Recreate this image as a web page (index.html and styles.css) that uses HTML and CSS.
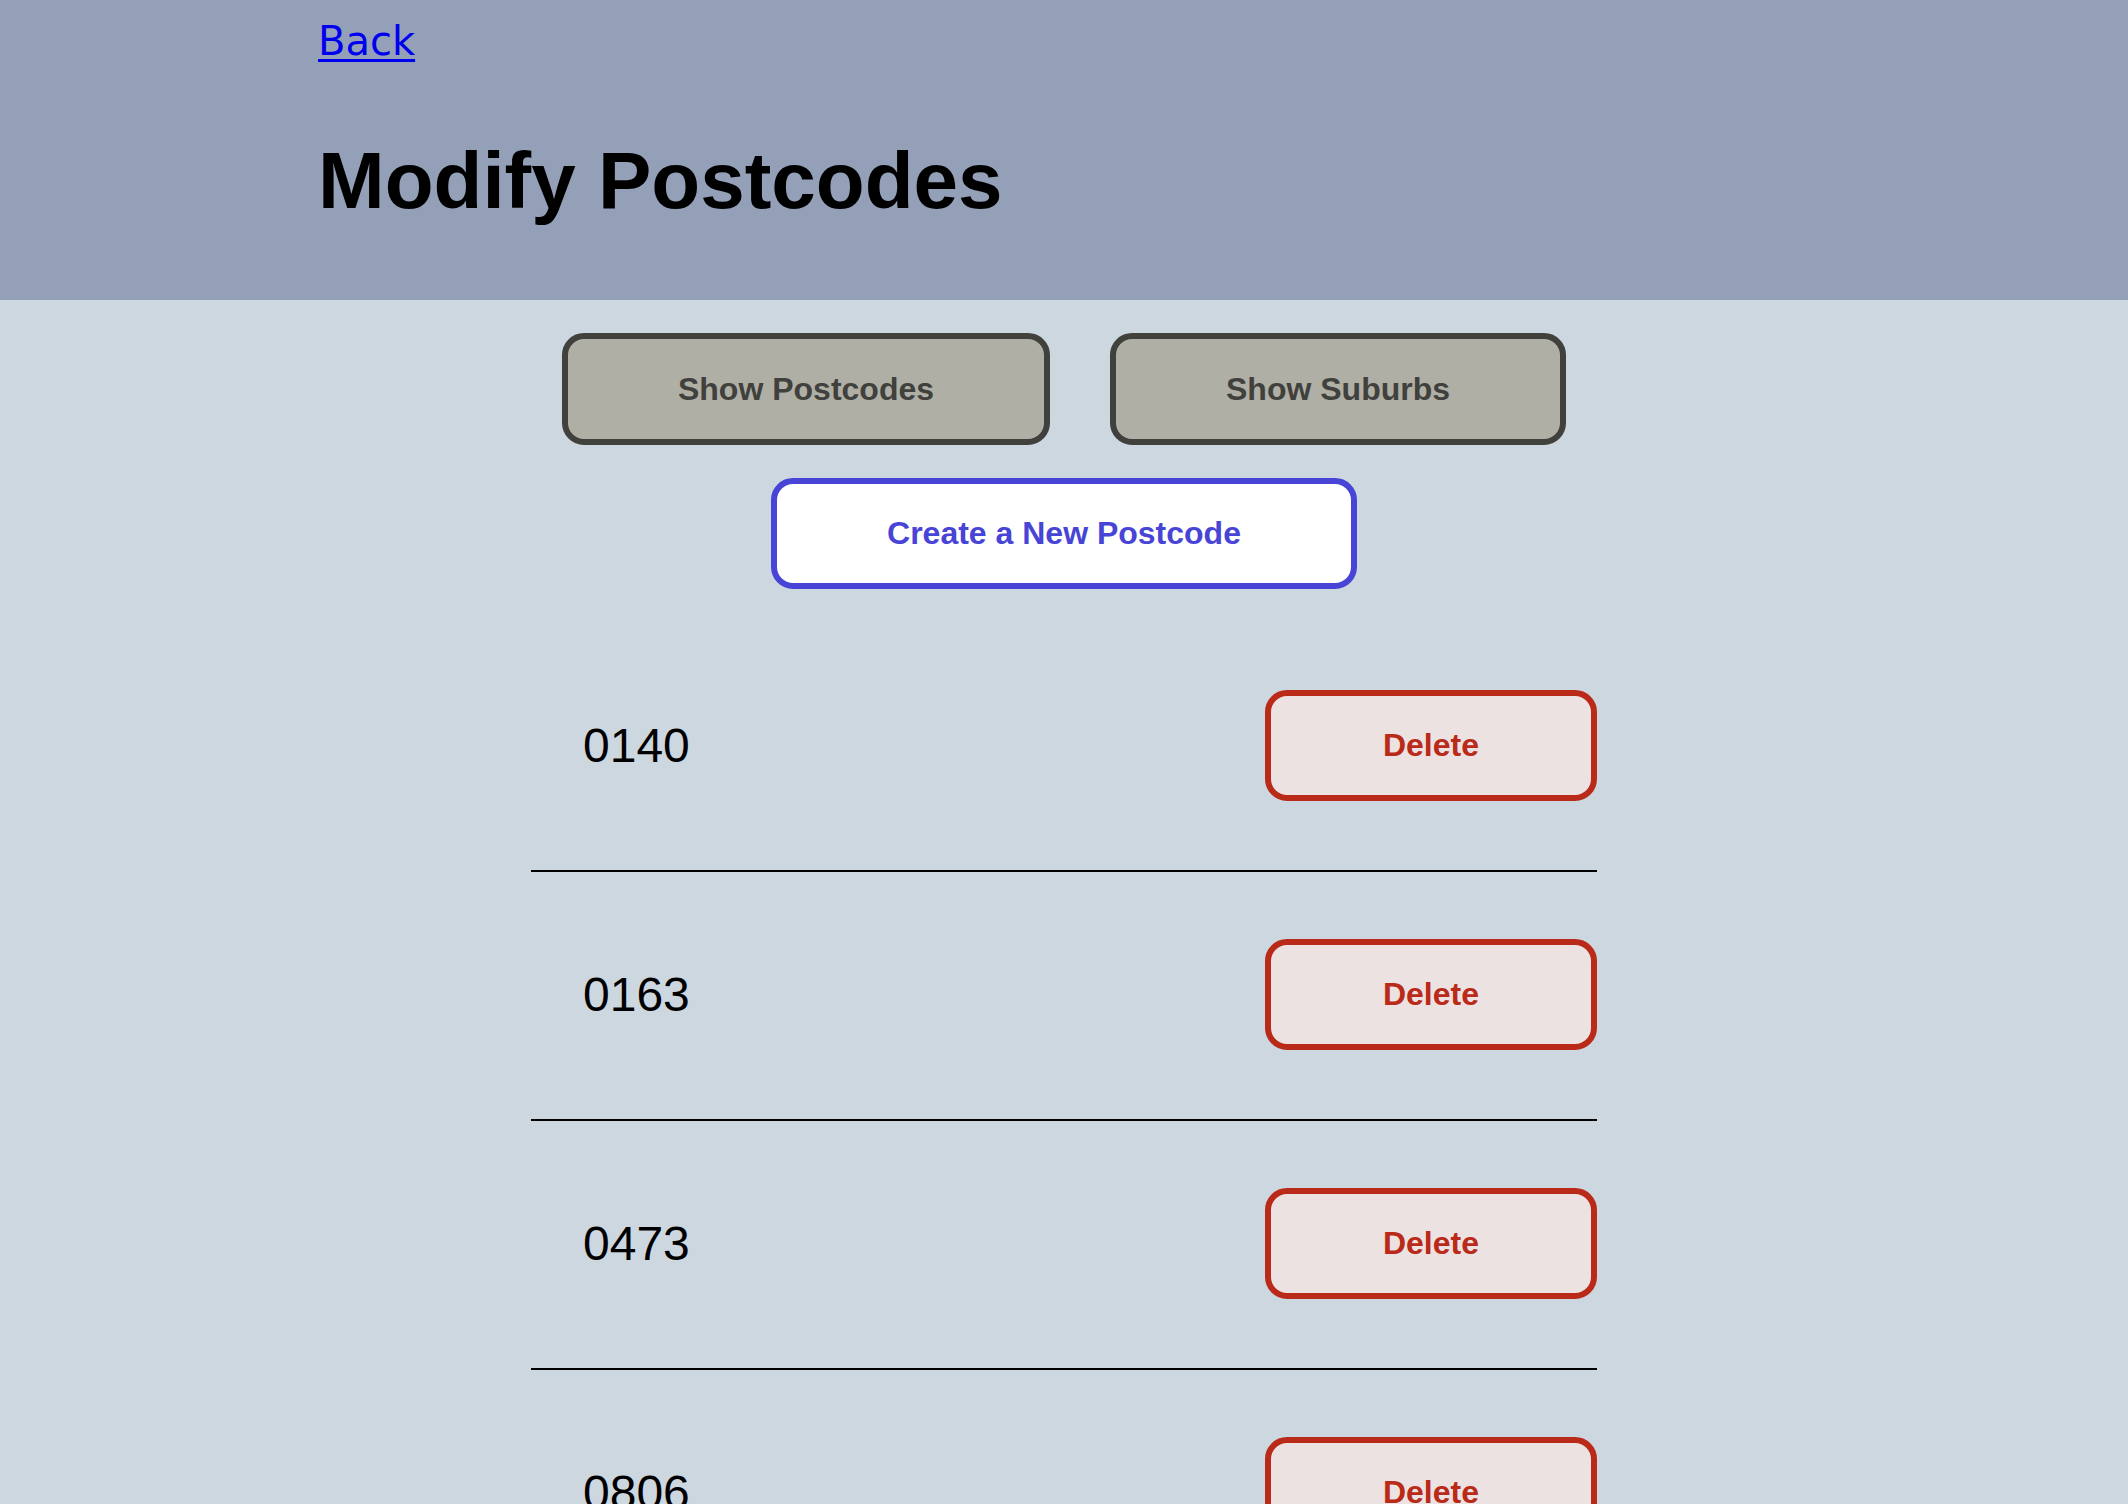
FILE: index.html
```html
<!DOCTYPE html>
<html lang="en">
<head>
<meta charset="utf-8">
<title>Modify Postcodes</title>
<link rel="stylesheet" href="styles.css">
</head>
<body>
  <header class="header">
    <a class="back" href="#">Back</a>
    <h1 class="title">Modify Postcodes</h1>
  </header>
  <main class="main">
    <div class="toggle-row">
      <button class="btn btn-gray">Show Postcodes</button>
      <button class="btn btn-gray">Show Suburbs</button>
    </div>
    <div class="create-row">
      <button class="btn btn-create">Create a New Postcode</button>
    </div>
    <ul class="list">
      <li class="row"><span class="code">0140</span><button class="btn btn-delete">Delete</button></li>
      <li class="row"><span class="code">0163</span><button class="btn btn-delete">Delete</button></li>
      <li class="row"><span class="code">0473</span><button class="btn btn-delete">Delete</button></li>
      <li class="row"><span class="code">0806</span><button class="btn btn-delete">Delete</button></li>
      <li class="row"><span class="code">0807</span><button class="btn btn-delete">Delete</button></li>
    </ul>
  </main>
</body>
</html>
```
FILE: styles.css
```css
html, body {
  margin: 0;
  padding: 0;
}
body {
  background: #cdd7e0;
  font-family: "Liberation Sans", Arial, sans-serif;
  color: #000;
}
.header {
  background: #94a0b8;
  height: 300px;
  box-sizing: border-box;
  padding: 18px 0 0 318px;
}
.back {
  display: inline-block;
  font-family: "DejaVu Sans", sans-serif;
  font-size: 40px;
  line-height: 46px;
  color: #0000ee;
  text-decoration-thickness: 3px;
  text-underline-offset: 4px;
}
.title {
  margin: 71px 0 0 0;
  font-family: "Liberation Sans", Arial, sans-serif;
  font-weight: 700;
  font-size: 80px;
  line-height: 92px;
}
.main {
  padding-top: 33px;
}
.toggle-row {
  display: flex;
  justify-content: center;
  gap: 60px;
}
.create-row {
  display: flex;
  justify-content: center;
  margin-top: 33px;
}
.btn {
  display: inline-flex;
  align-items: center;
  justify-content: center;
  box-sizing: border-box;
  height: 112px;
  padding: 0 110px;
  border: 6px solid;
  border-radius: 22px;
  font-family: "Liberation Sans", Arial, sans-serif;
  font-weight: 700;
  font-size: 32px;
  white-space: nowrap;
  cursor: pointer;
}
.btn-gray {
  background: #afafa6;
  border-color: #40403c;
  color: #40403c;
}
.btn-create {
  height: 111px;
  background: #ffffff;
  border-color: #4744d6;
  color: #4744d6;
}
.btn-delete {
  height: 111px;
  padding: 0 112px;
  background: #ede2e2;
  border-color: #b92a19;
  color: #b92a19;
}
.list {
  list-style: none;
  width: 1066px;
  margin: 34px auto 0;
  padding: 0;
}
.row {
  display: flex;
  align-items: center;
  justify-content: space-between;
  padding: 67px 0 69px 52px;
  border-bottom: 2px solid #000;
}
.code {
  font-size: 48px;
  color: #000;
}
```
